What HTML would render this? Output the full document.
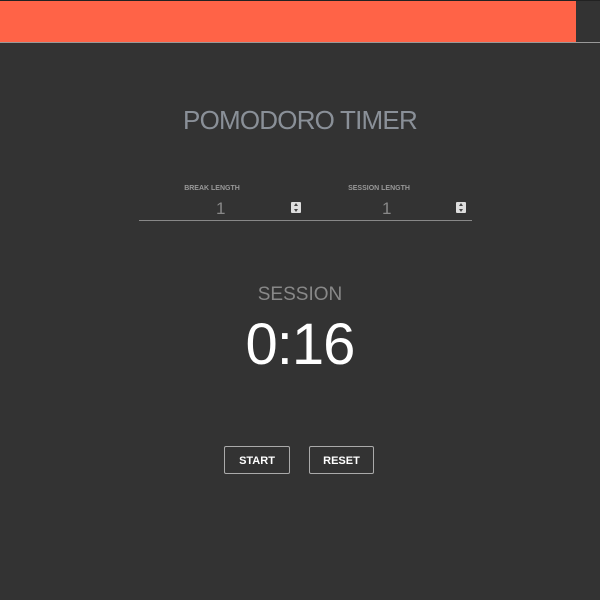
<!DOCTYPE html>
<html><head><style>
body{margin:0;width:600px;height:600px;background:#333;font-family:"Liberation Sans",sans-serif;position:relative;overflow:hidden}
.bar{position:absolute;left:0;top:1px;width:576px;height:41px;background:#ff6347}
.top{position:absolute;left:0;top:0;width:600px;height:1px;background:#222}
.line{position:absolute;left:0;top:42px;width:600px;height:1px;background:#999}
.t{position:absolute;width:600px;text-align:center;left:0}
.lbl{position:absolute;font-size:7px;color:#999;font-weight:bold;text-align:center}
.num{position:absolute;font-size:17px;color:#888;}
.sp{position:absolute;width:10px;height:11px;background:#ddd;border-radius:1px}
.sp:before{content:"";position:absolute;left:3px;top:1px;border:2px solid transparent;border-bottom:3px solid #444;border-top:0}
.sp:after{content:"";position:absolute;left:3px;bottom:1px;border:2px solid transparent;border-top:3px solid #444;border-bottom:0}
.btn{position:absolute;top:446px;height:28px;border:1px solid #aaa;border-radius:2px;color:#fff;font-size:11px;font-weight:bold;text-align:center;line-height:28px;box-sizing:border-box}
</style></head><body>
<div class="top"></div><div class="bar"></div><div class="line"></div>
<div class="t" style="top:105px;font-size:26px;color:#8a9098;letter-spacing:-0.8px">POMODORO TIMER</div>
<div class="lbl" style="left:172px;top:185px;width:80px">BREAK LENGTH</div>
<div class="lbl" style="left:334px;top:185px;width:90px">SESSION LENGTH</div>
<div class="num" style="left:216px;top:199px">1</div>
<div class="num" style="left:382px;top:199px">1</div>
<div class="sp" style="left:291px;top:202px"></div>
<div class="sp" style="left:456px;top:202px"></div>
<div style="position:absolute;left:139px;top:220px;width:333px;height:1px;background:#888"></div>
<div class="t" style="top:284px;font-size:19px;color:#888">SESSION</div>
<div class="t" style="top:311px;font-size:58px;color:#fff;letter-spacing:-1px">0:16</div>
<div class="btn" style="left:224px;width:66px">START</div>
<div class="btn" style="left:309px;width:65px">RESET</div>
</body></html>
